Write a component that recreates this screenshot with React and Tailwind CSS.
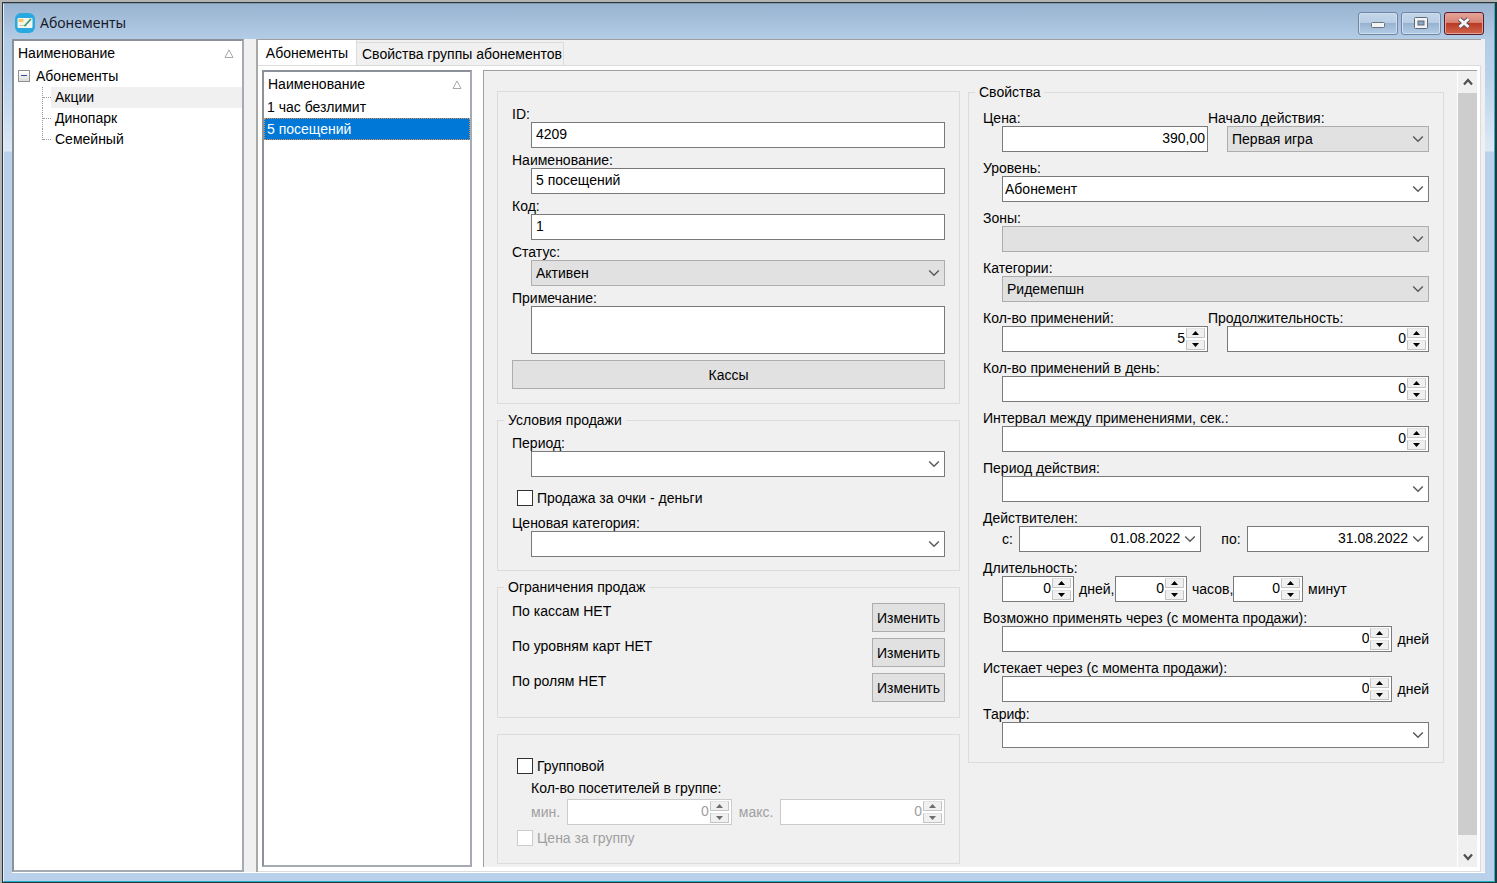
import { useId, useState } from "react";

function Chevron({ className = "" }) {
  return (
    <svg viewBox="0 0 12 8" className={"w-3 h-2 shrink-0 " + className} fill="none" stroke="#5a5a5a" strokeWidth="1.5" aria-hidden="true">
      <path d="M1.200 1.500 L6 6.200 L10.800 1.500" />
    </svg>
  );
}

function Label({ htmlFor, tight, children }) {
  return (
    <label htmlFor={htmlFor} className={(tight ? "pt-1" : "pt-2") + " block leading-4 whitespace-nowrap"}>
      {children}
    </label>
  );
}

function TextField({ label, value, tight, right }) {
  const id = useId();
  return (
    <div className="min-w-0">
      <Label htmlFor={id} tight={tight}>{label}</Label>
      <div className="pl-[19px]">
        <input
          id={id}
          defaultValue={value}
          className={(right ? "text-right pr-0.5" : "pl-1") + " block w-full h-[26px] bg-white border border-[#7a7a7a] pb-0.5 outline-none"}
        />
      </div>
    </div>
  );
}

function SelectField({ label, value = "", tight, gray }) {
  const id = useId();
  return (
    <div className="min-w-0">
      <Label htmlFor={id} tight={tight}>{label}</Label>
      <div className="pl-[19px]">
        <div className="relative">
          <select
            id={id}
            defaultValue={value}
            className={(gray ? "bg-[#e1e1e1] border-[#adadad] pl-1" : "bg-white border-[#7a7a7a] pl-0.5") + " block w-full h-[26px] border appearance-none outline-none"}
          >
            <option value={value}>{value}</option>
          </select>
          <Chevron className="absolute right-[5px] top-[9px] pointer-events-none" />
        </div>
      </div>
    </div>
  );
}

function Spinner({ id, value, disabled, className = "", label }) {
  const [n, setN] = useState(value);
  const button = "h-[10px] w-[19px] flex items-center justify-center bg-[#f0f0f0] border border-[#c4c4c4] border-t-[#e3e3e3]";
  const fill = disabled ? "#6d6d6d" : "#000";
  return (
    <div className={(disabled ? "border-[#cccccc] text-[#a0a0a0]" : "border-[#7a7a7a]") + " flex items-center h-[26px] bg-white border pr-0.5 " + className}>
      <input
        id={id}
        aria-label={label}
        value={n}
        disabled={disabled}
        inputMode="numeric"
        onChange={(e) => setN(Number(e.target.value.replace(/\D/g, "")))}
        className="flex-1 min-w-0 w-full h-full text-right pr-px pb-0.5 outline-none bg-transparent"
      />
      <div className="flex flex-col gap-0.5 shrink-0">
        <button type="button" aria-label="Больше" disabled={disabled} onClick={() => setN(n + 1)} className={button}>
          <svg viewBox="0 0 7 4" className="w-[7px] h-1" fill={fill}><path d="M0 4 L3.5 0 L7 4 Z" /></svg>
        </button>
        <button type="button" aria-label="Меньше" disabled={disabled} onClick={() => setN(Math.max(0, n - 1))} className={button}>
          <svg viewBox="0 0 7 4" className="w-[7px] h-1" fill={fill}><path d="M0 0 L3.5 4 L7 0 Z" /></svg>
        </button>
      </div>
    </div>
  );
}

function SpinField({ label, value, suffix }) {
  const id = useId();
  return (
    <div className="min-w-0">
      <Label htmlFor={id}>{label}</Label>
      <div className="pl-[19px] flex items-center gap-[5px]">
        <Spinner id={id} value={value} className="flex-1 min-w-0" />
        {suffix && <span>{suffix}</span>}
      </div>
    </div>
  );
}

function DateField({ label, value }) {
  const id = useId();
  return (
    <>
      <label htmlFor={id} className="shrink-0">{label}</label>
      <div className="relative flex-1 min-w-0">
        <input id={id} defaultValue={value} className="block w-full h-[26px] bg-white border border-[#7a7a7a] text-right pr-5 pb-0.5 outline-none" />
        <button type="button" aria-label="Открыть календарь" className="absolute right-[5px] top-[9px]"><Chevron /></button>
      </div>
    </>
  );
}

function Check({ label, disabled }) {
  return (
    <label className={(disabled ? "text-[#a0a0a0]" : "") + " flex items-center gap-1 h-[18px] pl-[5px]"}>
      <input
        type="checkbox"
        disabled={disabled}
        className={(disabled ? "border-[#cccccc]" : "border-[#333333]") + " appearance-none size-4 border bg-white checked:bg-[#0078d7]"}
      />
      {label}
    </label>
  );
}

function Group({ title, className = "", children }) {
  return (
    <fieldset className={"border border-[#dcdcdc] min-w-0 " + className}>
      <legend className="ml-1.5 px-1 leading-4">{title}</legend>
      <div className="px-[14px]">{children}</div>
    </fieldset>
  );
}

function SortMark() {
  return (
    <svg viewBox="0 0 10 9" className="w-[10px] h-[9px]" fill="none" stroke="#a8a8a8" aria-hidden="true">
      <path d="M1 8.5 L5 0.9 L9 8.5 Z" />
    </svg>
  );
}

function PushButton({ children, className }) {
  return (
    <button type="button" className={"bg-[#e1e1e1] border border-[#adadad] h-[29px] " + className}>{children}</button>
  );
}

function TitleBar() {
  const base = "w-10 h-[23px] flex items-center justify-center rounded-[3px] border ";
  const blue = base + "border-[#6f85a3] bg-[linear-gradient(#c3d6ea_0%,#b9cee4_45%,#98b3d1_50%,#b4cde6_100%)] shadow-[inset_0_0_0_1px_#cfdff0]";
  return (
    <header className="flex items-center h-[35px] pt-[3px] pl-[3px] pr-px gap-[5px]">
      <svg viewBox="0 0 20 20" className="size-5" aria-hidden="true">
        <rect width="20" height="20" rx="6" fill="#2aa9e0" />
        <rect x="2.500" y="5" width="15" height="10" rx="1" fill="#f4f6ee" />
        <path d="M3.500 6h5v3h-5z" fill="#f6c667" />
        <path d="M4.500 12.500h7" stroke="#b9cdb8" strokeWidth="1" />
        <path d="M10 12.500 L15.500 6.500" stroke="#3c9a6c" strokeWidth="1.800" strokeLinecap="round" />
      </svg>
      <h1 className="flex-1 text-[14px] leading-5 font-['Noto_Sans',sans-serif] text-[#1a1a2a]">Абонементы</h1>
      <div className="flex gap-[3px]">
        <button type="button" aria-label="Свернуть" className={blue}>
          <svg viewBox="0 0 14 6" className="w-[14px] h-1.5 mt-1"><rect x="0.500" y="0.500" width="13" height="5" rx="1" fill="#f4f4f4" stroke="#6a7480" /></svg>
        </button>
        <button type="button" aria-label="Развернуть" className={blue}>
          <svg viewBox="0 0 14 12" className="w-[14px] h-3">
            <rect x="0.500" y="0.500" width="13" height="11" rx="1" fill="#f4f4f4" stroke="#5f6a78" />
            <rect x="4" y="4" width="6" height="4" fill="#8ba7c8" stroke="#5f6a78" />
          </svg>
        </button>
        <button type="button" aria-label="Закрыть" className={base + "border-[#5a1a30] bg-[linear-gradient(#e5a69a_0%,#d88474_45%,#bb3a22_50%,#d0664e_100%)] shadow-[inset_0_0_0_1px_#e0a196]"}>
          <svg viewBox="0 0 16 12" className="w-4 h-3" fill="none">
            <path d="M3.500 2 L12.500 10 M12.500 2 L3.500 10" stroke="#5c4a58" strokeWidth="5" />
            <path d="M3.500 2 L12.500 10 M12.500 2 L3.500 10" stroke="#f6f6f6" strokeWidth="3" />
          </svg>
        </button>
      </div>
    </header>
  );
}

function Tree() {
  const items = ["Акции", "Динопарк", "Семейный"];
  return (
    <nav className="w-[232px] shrink-0 bg-white border-2 border-[#8c9098] border-r-[#a6aab2] border-b-[#a6aab2]">
      <div className="flex items-center justify-between h-6 pl-1 pr-2">
        <span>Наименование</span>
        <SortMark />
      </div>
      <div className="flex items-center h-[21px] pl-1 gap-[6px]">
        <button type="button" aria-label="Свернуть ветвь" className="size-[12px] border border-[#919191] bg-[linear-gradient(#fff,#dcdcdc)] flex items-center justify-center">
          <span className="w-1.5 h-px bg-[#2f4a9a]" />
        </button>
        <span>Абонементы</span>
      </div>
      <ul className="pt-px">
        {items.map((name, i) => (
          <li key={name} className="flex h-[21px] pl-7">
            <span className={(i === 2 ? "h-[11px]" : "h-[21px]") + " w-[9px] flex items-end border-l border-dotted border-[#9a9a9a]"}>
              <span className={(i === 2 ? "" : "mb-[10px]") + " w-full border-b border-dotted border-[#9a9a9a]"} />
            </span>
            <a href="#" className={(i === 0 ? "bg-[#f0f0f0]" : "") + " flex-1 pl-1 leading-[21px]"}>{name}</a>
          </li>
        ))}
      </ul>
    </nav>
  );
}

function PassList() {
  return (
    <div className="w-[210px] shrink-0 bg-white border-2 border-[#8c9098] border-r-[#a6aab2] border-b-[#a6aab2]">
      <div className="flex items-center justify-between h-6 pl-1 pr-2">
        <span>Наименование</span>
        <SortMark />
      </div>
      <ul role="listbox" aria-label="Абонементы" className="leading-[22px]">
        <li role="option" aria-selected="false" className="pl-[3px]">1 час безлимит</li>
        <li role="option" aria-selected="true" className="bg-[#0078d7] text-white pl-0.5 border border-dotted border-[#e09050] leading-5">5 посещений</li>
      </ul>
    </div>
  );
}

function LeftColumn() {
  return (
    <>
      <section className="border border-[#dcdcdc] px-[14px] pt-[10px] pb-[14px]">
        <TextField tight label="ID:" value="4209" />
        <TextField tight label="Наименование:" value="5 посещений" />
        <TextField tight label="Код:" value="1" />
        <SelectField tight gray label="Статус:" value="Активен" />
        <Label htmlFor="note" tight>Примечание:</Label>
        <div className="pl-[19px]">
          <textarea id="note" className="block w-full h-12 resize-none bg-white border border-[#7a7a7a] outline-none" />
        </div>
        <PushButton className="mt-1.5 w-full">Кассы</PushButton>
      </section>

      <Group title="Условия продажи" className="mt-2 pb-[13px]">
        <div className="pt-[3px]"><SelectField tight label="Период:" /></div>
        <div className="pt-3 pb-1"><Check label="Продажа за очки - деньги" /></div>
        <SelectField label="Ценовая категория:" tight />
      </Group>

      <Group title="Ограничения продаж" className="mt-2 pb-[15px]">
        <div className="flex flex-col gap-1.5 pt-2">
          {["По кассам НЕТ", "По уровням карт НЕТ", "По ролям НЕТ"].map((text) => (
            <div key={text} className="flex justify-between">
              <span className="leading-4">{text}</span>
              <PushButton className="w-[73px]">Изменить</PushButton>
            </div>
          ))}
        </div>
      </Group>

      <section className="mt-4 border border-[#dcdcdc] px-[14px] pt-[22px] pb-4">
        <Check label="Групповой" />
        <div className="pl-[19px] pt-1 pb-0.5 leading-[18px]">Кол-во посетителей в группе:</div>
        <div className="pl-[19px] flex items-center gap-[7px] text-[#a0a0a0]">
          <span>мин.</span>
          <Spinner value={0} disabled label="мин." className="flex-1 min-w-0" />
          <span>макс.</span>
          <Spinner value={0} disabled label="макс." className="flex-1 min-w-0" />
        </div>
        <div className="pt-1"><Check label="Цена за группу" disabled /></div>
      </section>
    </>
  );
}

function RightColumn() {
  return (
    <Group title="Свойства" className="pb-[14px]">
      <div className="pt-0.5">
        <div className="grid grid-cols-[225fr_221fr]">
          <TextField label="Цена:" value="390,00" right />
          <SelectField label="Начало действия:" value="Первая игра" gray />
        </div>
        <SelectField label="Уровень:" value="Абонемент" />
        <SelectField label="Зоны:" gray />
        <SelectField label="Категории:" value="Ридемепшн" gray />
        <div className="grid grid-cols-[225fr_221fr]">
          <SpinField label="Кол-во применений:" value={5} />
          <SpinField label="Продолжительность:" value={0} />
        </div>
        <SpinField label="Кол-во применений в день:" value={0} />
        <SpinField label="Интервал между применениями, сек.:" value={0} />
        <SelectField label="Период действия:" />
        <div className="pt-2 leading-4">Действителен:</div>
        <div className="pl-[19px] flex items-center gap-[6px]">
          <DateField label="с:" value="01.08.2022" />
          <span className="w-2" />
          <DateField label="по:" value="31.08.2022" />
        </div>
        <div className="pt-2 leading-4">Длительность:</div>
        <div className="pl-[19px] flex items-center">
          <Spinner value={0} label="дней" className="w-[72px]" />
          <span className="pl-[5px] w-[41px]">дней,</span>
          <Spinner value={0} label="часов" className="w-[72px]" />
          <span className="pl-[5px] w-[46px]">часов,</span>
          <Spinner value={0} label="минут" className="w-[70px]" />
          <span className="pl-[5px]">минут</span>
        </div>
        <SpinField label="Возможно применять через (с момента продажи):" value={0} suffix="дней" />
        <SpinField label="Истекает через (с момента продажи):" value={0} suffix="дней" />
        <SelectField tight label="Тариф:" />
      </div>
    </Group>
  );
}

function ScrollBar() {
  return (
    <div className="w-5 shrink-0 flex flex-col bg-[#f0f0f0] border-l border-white">
      <button type="button" aria-label="Прокрутить вверх" className="h-[22px] flex items-center justify-center">
        <svg viewBox="0 0 10 8" className="w-[10px] h-2" fill="none" stroke="#505050" strokeWidth="2.200"><path d="M1 6.500 L5 2 L9 6.500" /></svg>
      </button>
      <div className="flex-1 bg-[#cdcdcd]" />
      <button type="button" aria-label="Прокрутить вниз" className="h-8 pt-3 flex justify-center">
        <svg viewBox="0 0 10 8" className="w-[10px] h-2 mt-1.5" fill="none" stroke="#505050" strokeWidth="2.200"><path d="M1 1.500 L5 6 L9 1.500" /></svg>
      </button>
    </div>
  );
}

export default function App() {
  return (
    <div className="min-h-screen flex flex-col bg-[#b4b4b4] pt-0.5 pl-0.5 text-black text-[14px] leading-4 font-['Liberation_Sans',Arial,sans-serif]">
      <div className="flex-1 flex flex-col bg-[#26363c] pt-px pl-px pr-0.5 pb-px">
        <div className="flex-1 flex flex-col border border-t-[#8496a8] border-l-[#e6eef7] border-r-[#2fb3c9] border-b-[#1fb0c8] bg-[linear-gradient(#99b4d1_0px,#b4cde7_36px,#b9d1ea_70px,#dce9f6_147px,#b9d1ea_148px)] pl-2 pr-[9px] pb-2">
          <TitleBar />
          <div className="flex-1 flex bg-[#f0f0f0] pr-1 border-b border-white">
            <Tree />
            <div className="flex-1 min-w-0 ml-3 flex flex-col border-l-2 border-[#a8a8a8]">
              <div role="tablist" className="flex items-end border-t border-[#a0a0a0]">
                <button type="button" role="tab" aria-selected="true" className="h-[25px] w-[99px] bg-white border-r border-[#dcdcdc]">Абонементы</button>
                <button type="button" role="tab" aria-selected="false" className="h-[23px] pl-[5px] pr-px border-t border-r border-[#dcdcdc]">Свойства группы абонементов</button>
              </div>
              <div className="flex-1 flex bg-white border-t border-r border-b border-[#dcdcdc] pl-1 pr-[3px] py-1">
                <PassList />
                <div className="ml-[11px] flex-1 min-w-0 flex bg-[#f0f0f0] border-t border-l border-[#a0a0a0]">
                  <div className="flex-1 min-w-0 flex items-start gap-2 px-[13px]">
                    <div className="flex-[463] min-w-0 pt-5">
                      <LeftColumn />
                    </div>
                    <div className="flex-[476] min-w-0 pt-[13px]">
                      <RightColumn />
                    </div>
                  </div>
                  <ScrollBar />
                </div>
              </div>
            </div>
          </div>
        </div>
      </div>
    </div>
  );
}
